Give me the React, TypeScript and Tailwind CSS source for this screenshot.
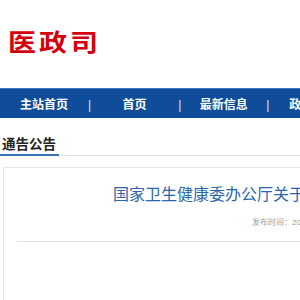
const navItems = [
  { label: '主站首页', width: 'w-[88px]' },
  { label: '首页', width: 'w-[87px]' },
  { label: '最新信息', width: 'w-[85px]' },
  { label: '政务公开', width: 'w-[88px]' },
]

const cjk = { fontFamily: '"Liberation Sans", "Noto Sans CJK SC", sans-serif' }

function NavBar() {
  return (
    <nav className="flex h-[30px] w-[400px] items-center border-t border-[#3d79c2] bg-[#0f4c99] pt-[2px] text-white">
      {navItems.map((item, i) => (
        <div key={item.label} className="flex items-center">
          {i > 0 && <span className="text-[12px] leading-none text-[#dfe8f5]">|</span>}
          <span className={`${item.width} text-center text-[12px] font-bold leading-none whitespace-nowrap`}>
            {item.label}
          </span>
        </div>
      ))}
    </nav>
  )
}

export default function App() {
  return (
    <div className="h-[300px] w-[300px] overflow-hidden bg-white" style={cjk}>
      <header className="flex h-[88px] items-center pl-[8px]">
        <h1 className="-mt-[3px] origin-center scale-y-[0.85] text-[28px] leading-none font-bold tracking-[3px] text-[#d4000e]">
          医政司
        </h1>
      </header>
      <NavBar />
      <section className="mt-[19px]">
        <div className="flex w-[420px] border-b border-[#e3e3e3]">
          <h2 className="-mb-px border-b-2 border-[#3a72b8] pl-[2px] pr-[3px] pb-[1px] text-[13.5px] leading-[16px] font-bold text-[#222]">
            通告公告
          </h2>
        </div>
        <article className="mt-[11px] ml-[3px] h-[200px] w-[500px] border border-[#e6e6e6]">
          <h3 className="mt-[17px] pl-[109px] text-[16px] leading-[20px] whitespace-nowrap text-[#2a66ad]">
            国家卫生健康委办公厅关于印发医疗机构相关工作的通知
          </h3>
          <p className="mt-[13px] pl-[248px] text-[8px] leading-[10px] whitespace-nowrap text-[#9a9a9a]">
            发布时间：2024-01-01
          </p>
          <div className="mt-[13px] ml-[13px] h-px w-[470px] bg-[#e3e3e3]" />
        </article>
      </section>
    </div>
  )
}
